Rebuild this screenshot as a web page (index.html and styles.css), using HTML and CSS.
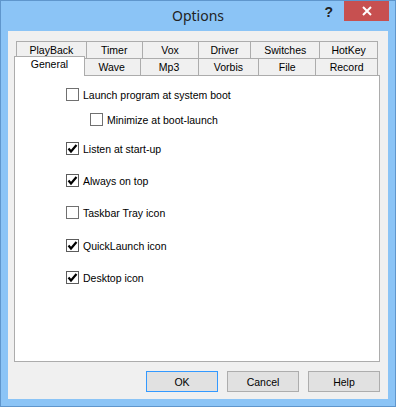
FILE: index.html
```html
<!DOCTYPE html>
<html lang="en">
<head>
  <meta charset="UTF-8">
  <title>Options</title>
  <link rel="stylesheet" href="styles.css">
</head>
<body>
  <div class="window">
    <div class="titlebar">
      <div class="title">Options</div>
      <div class="controls">
        <span class="qmark">?</span>
        <span class="close">
          <svg width="10" height="10" viewBox="0 0 10 10">
            <path d="M1 1 L9 9 M9 1 L1 9" stroke="#fff" stroke-width="2" />
          </svg>
        </span>
      </div>
    </div>

    <div class="client">
      <div class="tabs">
        <div class="tabrow">
          <div class="tab" style="width:70px">PlayBack</div>
          <div class="tab" style="width:56px">Timer</div>
          <div class="tab" style="width:56px">Vox</div>
          <div class="tab" style="width:53px">Driver</div>
          <div class="tab" style="width:69px">Switches</div>
          <div class="tab last" style="width:59px">HotKey</div>
        </div>
        <div class="tabrow">
          <div class="tab sel" style="width:71px">General</div>
          <div class="tab" style="width:57px">Wave</div>
          <div class="tab" style="width:58px">Mp3</div>
          <div class="tab" style="width:61px">Vorbis</div>
          <div class="tab" style="width:57px">File</div>
          <div class="tab last" style="width:63px">Record</div>
        </div>
      </div>

      <div class="panel">
        <div class="opt first"><span class="box"></span>Launch program at system boot</div>
        <div class="opt sub"><span class="box"></span>Minimize at boot-launch</div>
        <div class="opt after-sub"><span class="box on"><svg width="11" height="11" viewBox="0 0 11 11"><path d="M1.5 5.5 L4 8.5 L9.5 2" fill="none" stroke="#000" stroke-width="2.2" /></svg></span>Listen at start-up</div>
        <div class="opt"><span class="box on"><svg width="11" height="11" viewBox="0 0 11 11"><path d="M1.5 5.5 L4 8.5 L9.5 2" fill="none" stroke="#000" stroke-width="2.2" /></svg></span>Always on top</div>
        <div class="opt"><span class="box"></span>Taskbar Tray icon</div>
        <div class="opt wide"><span class="box on"><svg width="11" height="11" viewBox="0 0 11 11"><path d="M1.5 5.5 L4 8.5 L9.5 2" fill="none" stroke="#000" stroke-width="2.2" /></svg></span>QuickLaunch icon</div>
        <div class="opt"><span class="box on"><svg width="11" height="11" viewBox="0 0 11 11"><path d="M1.5 5.5 L4 8.5 L9.5 2" fill="none" stroke="#000" stroke-width="2.2" /></svg></span>Desktop icon</div>
      </div>

      <div class="buttons">
        <button class="btn default">OK</button>
        <button class="btn">Cancel</button>
        <button class="btn">Help</button>
      </div>
    </div>
  </div>
</body>
</html>
```

FILE: styles.css
```css
html, body {
  margin: 0;
  padding: 0;
  background: #fff;
}
.window {
  width: 396px;
  height: 407px;
  box-sizing: border-box;
  border: 1px solid #5f96cc;
  background: #8bc4f6;
  font: 10.5px "Liberation Sans", Arial, sans-serif;
  color: #000;
}
.titlebar {
  height: 30px;
  display: grid;
  grid-template-columns: 1fr auto 1fr;
}
.title {
  grid-column: 2;
  font: 14px "Noto Sans", "Open Sans", sans-serif;
  color: #222;
  line-height: 29px;
}
.controls {
  grid-column: 3;
  display: flex;
  justify-content: flex-end;
  align-items: flex-start;
  padding-right: 6px;
}
.qmark {
  font: bold 14px "Liberation Sans", Arial, sans-serif;
  color: #222;
  margin-top: 3px;
  margin-right: 11px;
}
.close {
  width: 45px;
  height: 20px;
  background: #c75050;
  display: flex;
  align-items: center;
  justify-content: center;
}
.client {
  margin: 0 7px;
  height: 368px;
  box-sizing: border-box;
  background: #f0f0f0;
  padding: 10px 8px 0 6px;
}
.tabs {
  padding: 0 2px;
}
.tabrow {
  display: flex;
  height: 17px;
  align-items: flex-start;
}
.tab {
  box-sizing: border-box;
  height: 17px;
  border-top: 1px solid #acacac;
  border-left: 1px solid #acacac;
  background: #f0f0f0;
  text-align: center;
  line-height: 16px;
}
.tab.last {
  border-right: 1px solid #acacac;
}
.tab.sel {
  position: relative;
  z-index: 1;
  height: 20px;
  margin: -2px -2px 0 -2px;
  background: #fff;
  border-right: 1px solid #acacac;
  line-height: 15px;
}
.panel {
  height: 287px;
  box-sizing: border-box;
  border: 1px solid #acacac;
  background: #fff;
  padding: 12px 0 0 51px;
  display: flex;
  flex-direction: column;
  gap: 19px;
}
.opt {
  display: flex;
  align-items: center;
  height: 13px;
  white-space: nowrap;
}
.opt.sub {
  margin-top: -7px;
  padding-left: 24px;
}
.opt.after-sub {
  margin-top: -3px;
}
.opt.wide {
  margin-top: 1px;
}
.box {
  width: 13px;
  height: 13px;
  box-sizing: border-box;
  border: 1px solid #707070;
  background: #fff;
  margin-right: 4px;
  display: flex;
  align-items: center;
  justify-content: center;
  flex: none;
}
.box.on {
  border-color: #5c5c5c;
}
.buttons {
  display: flex;
  justify-content: flex-end;
  gap: 9px;
  margin-top: 9px;
}
.btn {
  width: 72px;
  height: 21px;
  box-sizing: border-box;
  border: 1px solid #adadad;
  background: #e1e1e1;
  font: 10.5px "Liberation Sans", Arial, sans-serif;
  color: #000;
  padding: 0;
}
.btn.default {
  border-color: #3399ff;
}
```
